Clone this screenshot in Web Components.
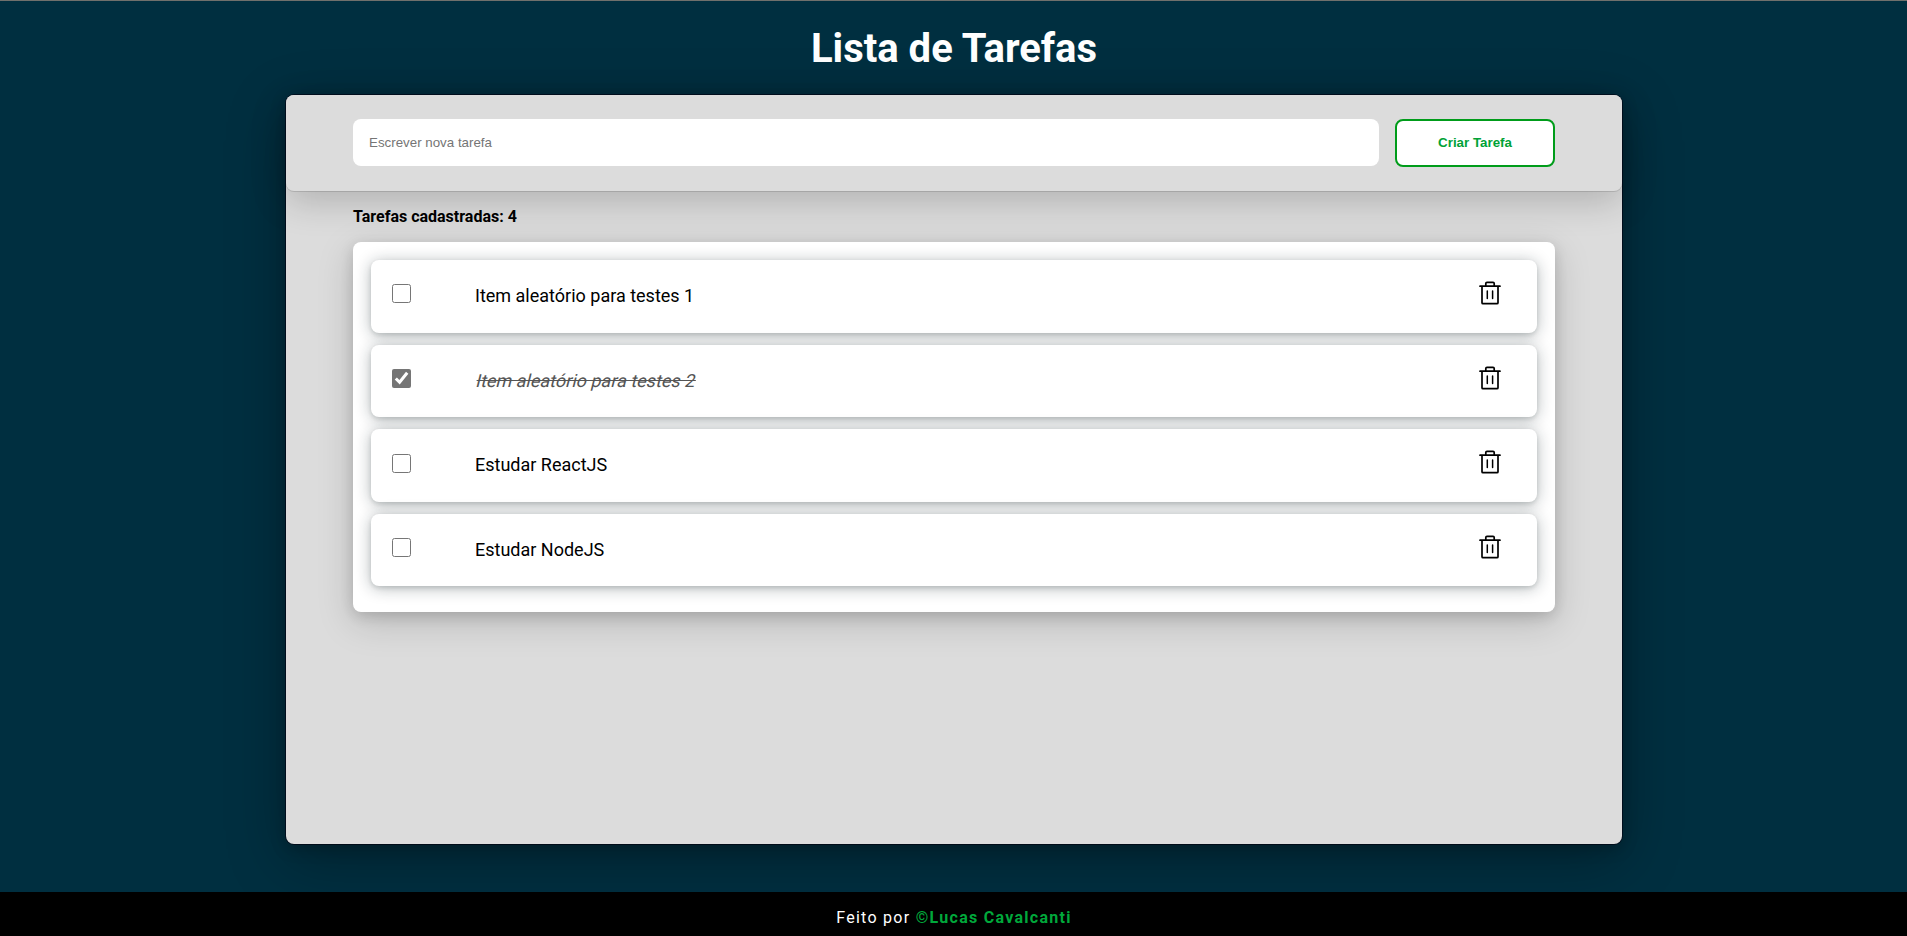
<!DOCTYPE html>
<html lang="pt-BR">
<head>
<meta charset="utf-8">
<title>Lista de Tarefas</title>
<style>
html,body{margin:0;height:100%}
body{font-family:Roboto,sans-serif;background:#002f40;overflow:hidden}
</style>
</head>
<body>
<todo-app>
  <todo-item>Item aleatório para testes 1</todo-item>
  <todo-item done>Item aleatório para testes 2</todo-item>
  <todo-item>Estudar ReactJS</todo-item>
  <todo-item>Estudar NodeJS</todo-item>
</todo-app>
<script>
class TodoForm extends HTMLElement{
  constructor(){
    super();
    this.attachShadow({mode:'open'}).innerHTML=`
<style>
:host{display:flex;box-sizing:border-box;height:96px;padding:24px 67px 0;gap:16px;align-items:flex-start;border-radius:8px;background:#dcdcdc;box-shadow:rgba(0,0,0,.2) 0 10px 36px 0,rgba(0,0,0,.12) 0 1px 0 0}
input{flex:1;min-width:0;box-sizing:border-box;height:47px;border:0;border-radius:8px;padding:0 16px;background:#fff;font:13.3333px "Liberation Sans",Arial,sans-serif}
input::placeholder{color:#757575}
button{box-sizing:border-box;width:160px;height:48px;border:2px solid #009c1a;border-radius:8px;background:#fff;color:#00a236;font:bold 13.3333px "Liberation Sans",Arial,sans-serif;padding:0 0 2px}
</style>
<input type="text" placeholder="Escrever nova tarefa"><button>Criar Tarefa</button>`;
  }
}
customElements.define('todo-form',TodoForm);

class TrashIcon extends HTMLElement{
  constructor(){
    super();
    this.attachShadow({mode:'open'}).innerHTML=`
<style>:host{display:block;width:24px;height:26px}svg{display:block}</style>
<svg width="24" height="26" viewBox="0 0 24 26" fill="none" stroke="#000" stroke-width="1.7" stroke-linecap="round" stroke-linejoin="round"><path d="M2 6.2H22M4 6.2V22.7Q4 23.7 5 23.7H19Q20 23.7 20 22.7V6.2M7.8 6V3.6Q7.8 2.4 9 2.4H15Q16.2 2.4 16.2 3.6V6"/><path stroke-width="1.5" d="M9.3 11V18.6M14.6 11V18.6"/></svg>`;
  }
}
customElements.define('trash-icon',TrashIcon);

class TodoItem extends HTMLElement{
  constructor(){
    super();
    this.attachShadow({mode:'open'}).innerHTML=`
<style>
:host{display:flex;box-sizing:border-box;height:72.6px;align-items:center;padding:0 35px 0 21px;border-radius:8px;background:#fff;box-shadow:rgba(14,30,37,.12) 0 2px 4px 0,rgba(14,30,37,.32) 0 2px 16px 0}
input{margin:0 64px 4.8px 0;width:19px;height:19px;flex:none}
div{flex:1;padding-bottom:1.4px;font-size:18px;line-height:21px;color:#000}
span{display:inline-block}
:host([done]) span{transform:skewX(-14deg);transform-origin:0 100%;text-decoration:line-through;color:#555;margin-left:-1px}
:host([done]) input{accent-color:#757575}
trash-icon{margin-bottom:6px}
</style>
<input type="checkbox"><div><span><slot></slot></span></div><trash-icon></trash-icon>`;
  }
  connectedCallback(){
    this.shadowRoot.querySelector('input').checked=this.hasAttribute('done');
  }
}
customElements.define('todo-item',TodoItem);

class TodoApp extends HTMLElement{
  constructor(){
    super();
    this.attachShadow({mode:'open'}).innerHTML=`
<style>
:host{display:flex;flex-direction:column;box-sizing:border-box;height:936px;align-items:center;border-top:1px solid #70706c}
h1{margin:0 0 0 1px;height:94px;line-height:96px;font-size:40px;font-weight:700;color:#fff}
main{width:1336px;height:749px;margin-left:1px;flex:none;border-radius:8px;background:#dcdcdc;box-shadow:rgba(0,0,0,.3) 0 16px 60px 0,rgba(0,0,0,.22) 0 4px 16px 0,rgba(0,0,20,.6) 0 0 0 1px}
h2{margin:16px 67px;font-size:16px;line-height:19px;font-weight:700}
section{margin:0 67px;box-sizing:border-box;height:370px;padding:18px;border-radius:8px;background:#fff;box-shadow:rgba(0,0,0,.17) 0 10px 36px 0,rgba(0,0,0,.14) 0 4px 14px 0;display:flex;flex-direction:column;gap:12px}
footer{margin-top:auto;width:100%;height:44px;box-sizing:border-box;padding-top:8px;background:#000;color:#fff;text-align:center;font-size:16px;line-height:36px;letter-spacing:1.28px;text-indent:1px;z-index:1}
b{color:#00a83b}
</style>
<h1>Lista de Tarefas</h1>
<main><todo-form></todo-form><h2>Tarefas cadastradas: 4</h2><section><slot></slot></section></main>
<footer>Feito por <b>©Lucas Cavalcanti</b></footer>`;
  }
}
customElements.define('todo-app',TodoApp);
</script>
</body>
</html>
